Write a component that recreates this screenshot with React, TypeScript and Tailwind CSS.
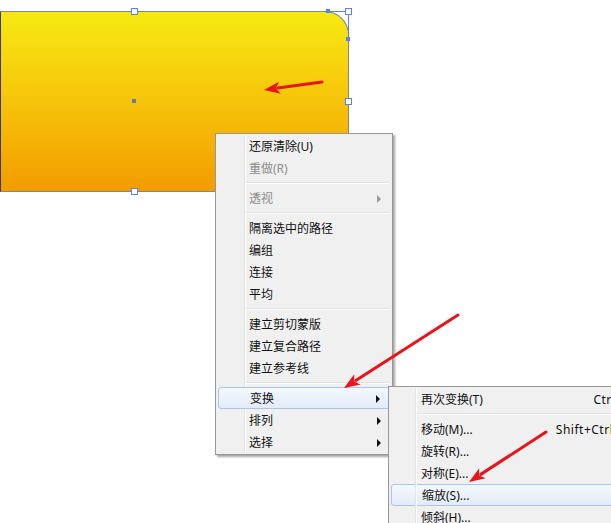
import React from "react";

type Item =
  | { kind: "sep" }
  | { kind: "item"; label: string; disabled?: boolean; sub?: boolean; active?: boolean; shortcut?: string };

const mainMenu: Item[] = [
  { kind: "item", label: "还原清除(U)" },
  { kind: "item", label: "重做(R)", disabled: true },
  { kind: "sep" },
  { kind: "item", label: "透视", disabled: true, sub: true },
  { kind: "sep" },
  { kind: "item", label: "隔离选中的路径" },
  { kind: "item", label: "编组" },
  { kind: "item", label: "连接" },
  { kind: "item", label: "平均" },
  { kind: "sep" },
  { kind: "item", label: "建立剪切蒙版" },
  { kind: "item", label: "建立复合路径" },
  { kind: "item", label: "建立参考线" },
  { kind: "sep" },
  { kind: "item", label: "变换", sub: true, active: true },
  { kind: "item", label: "排列", sub: true },
  { kind: "item", label: "选择", sub: true },
];

const transformMenu: Item[] = [
  { kind: "item", label: "再次变换(T)", shortcut: "Ctrl+D" },
  { kind: "sep" },
  { kind: "item", label: "移动(M)...", shortcut: "Shift+Ctrl+M" },
  { kind: "item", label: "旋转(R)..." },
  { kind: "item", label: "对称(E)..." },
  { kind: "item", label: "缩放(S)...", active: true },
  { kind: "item", label: "倾斜(H)..." },
];

export default function App() {
  return (
    <div
      className="relative w-[611px] h-[523px] overflow-hidden bg-white text-[12px] leading-none"
      style={{ fontFamily: '"Noto Sans", "Noto Sans CJK SC", sans-serif' }}
    >
      {/* selected shape */}
      <div className="mt-[11px] w-[349px] h-[181px] border border-l-[#3c3c3c] border-t-[#7f8790] border-r-[#7f8790] border-b-[#8a8478] rounded-tr-[24px] bg-gradient-to-b from-[#f7e912] via-[#f6c40a] to-[#f29b00]" />

      {/* main context menu */}
      <div className="absolute left-[215px] top-[133px] w-[178px] border border-[#979797] bg-[#f0f0f0] py-px shadow-[2px_2px_2px_rgba(0,0,0,0.35)]">
        <div className="absolute left-[28px] top-px bottom-px w-px bg-[#e2e3e3]" />
        <div className="absolute left-[29px] top-px bottom-px w-px bg-white" />
        <MainRows />
      </div>

      {/* transform submenu */}
      <div className="absolute left-[388px] top-[386px] w-[262px] border border-[#979797] bg-[#f0f0f0] py-px shadow-[2px_2px_2px_rgba(0,0,0,0.35)]">
        <div className="absolute left-[26px] top-px bottom-px w-px bg-[#e2e3e3]" />
        <div className="absolute left-[27px] top-px bottom-px w-px bg-white" />
        <SubRows />
      </div>

      {/* selection handles and annotation arrows */}
      <svg className="absolute inset-0 pointer-events-none" width="611" height="523">
        <path d="M328.5 11.5 H348.5 V39" stroke="#5b82e8" fill="none" />
        {[
          [134, 11],
          [348, 11],
          [348, 101],
          [134, 191],
        ].map(([x, y], i) => (
          <rect key={i} x={x - 2.5} y={y - 2.5} width="6" height="6" fill="#fff" stroke="#5b82e8" />
        ))}
        <rect x="326" y="9" width="4" height="4" fill="#5b82e8" />
        <rect x="346" y="37" width="4" height="4" fill="#5b82e8" />
        <rect x="132" y="99" width="4" height="4" fill="#6a78a8" />
        <Arrow x1={322} y1={82} x2={264} y2={90} />
        <Arrow x1={458} y1={315} x2={344} y2={388} />
        <Arrow x1={546} y1={432} x2={469} y2={482} />
      </svg>
    </div>
  );
}

function MainRows() {
  return (
    <>
      {mainMenu.map((it, i) =>
        it.kind === "sep" ? (
          <div key={i} className="h-[8px] flex flex-col justify-center ml-[30px] mr-[2px]">
            <div className="border-t border-[#e0e0e0] border-b border-b-white" />
          </div>
        ) : (
          <div
            key={i}
            className={`relative h-[22px] flex items-center pt-px ${
              it.active
                ? "mx-[2px] pl-[31px] rounded-[3px] border border-[#a8c6ec] bg-gradient-to-b from-[#f4f8fe] to-[#e2ebf8]"
                : "pl-[33px]"
            }`}
          >
            <span className={`flex-1 ${it.disabled ? "text-[#8d8d8d]" : "text-[#111]"}`}>{it.label}</span>
            {it.sub && (
              <span
                className={`${it.active ? "mr-[9px]" : "mr-[11px]"} w-0 h-0 border-y-[4px] border-y-transparent border-l-[4px] ${
                  it.disabled ? "border-l-[#9a9a9a]" : "border-l-[#111]"
                }`}
              />
            )}
          </div>
        )
      )}
    </>
  );
}

function SubRows() {
  return (
    <>
      {transformMenu.map((it, i) =>
        it.kind === "sep" ? (
          <div key={i} className="h-[8px] flex flex-col justify-center ml-[28px] mr-[2px]">
            <div className="border-t border-[#e0e0e0] border-b border-b-white" />
          </div>
        ) : (
          <div
            key={i}
            className={`h-[22px] flex items-center pt-px ${
              it.active
                ? "mx-[2px] pl-[30px] rounded-[3px] border border-[#a8c6ec] bg-gradient-to-b from-[#f4f8fe] to-[#e2ebf8]"
                : "pl-[32px]"
            }`}
          >
            <span className="flex-1 text-[#111]">{it.label}</span>
            {it.shortcut && <span className="pr-[17px] tracking-[0.5px] text-[#111]">{it.shortcut}</span>}
          </div>
        )
      )}
    </>
  );
}

function Arrow({ x1, y1, x2, y2 }: { x1: number; y1: number; x2: number; y2: number }) {
  const dx = x2 - x1;
  const dy = y2 - y1;
  const len = Math.hypot(dx, dy);
  const ux = dx / len;
  const uy = dy / len;
  const hl = 16;
  const hw = 6;
  const bx = x2 - ux * hl;
  const by = y2 - uy * hl;
  const px = -uy;
  const py = ux;
  return (
    <g>
      <line x1={x1} y1={y1} x2={bx + ux * 2} y2={by + uy * 2} stroke="#e8141a" strokeWidth="3" strokeLinecap="round" />
      <polygon
        points={`${x2},${y2} ${bx + px * hw},${by + py * hw} ${bx + ux * 4},${by + uy * 4} ${bx - px * hw},${by - py * hw}`}
        fill="#e8141a"
      />
    </g>
  );
}
